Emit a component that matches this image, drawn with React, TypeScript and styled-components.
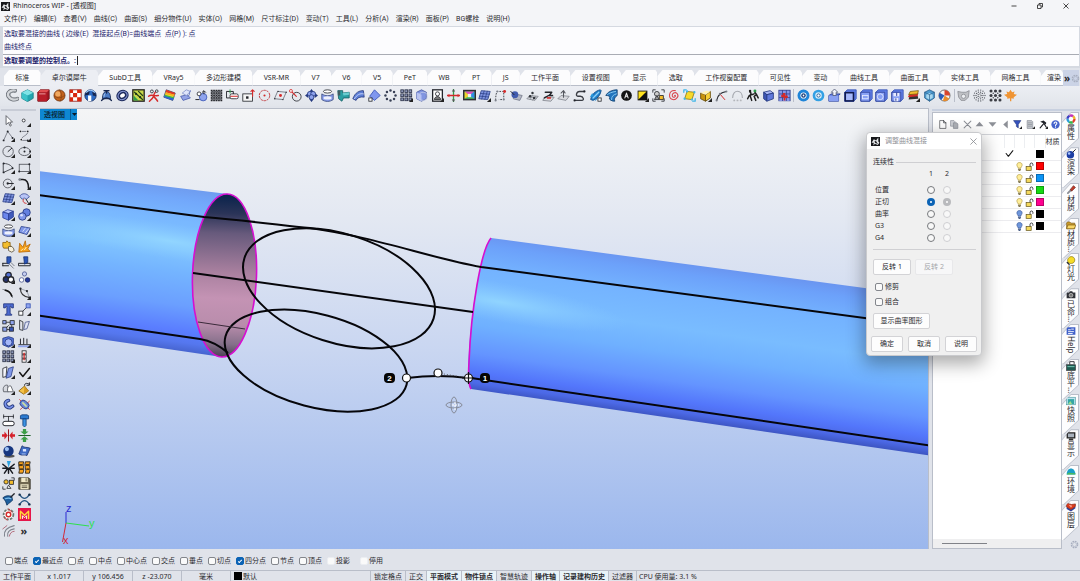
import React, { ReactNode } from 'react';
import styled, { createGlobalStyle } from 'styled-components';

const GlobalStyle = createGlobalStyle`
  *, *::before, *::after { box-sizing: border-box; }
  body { margin: 0; background: #e0e3ea; }
  button, input { font: inherit; color: inherit; }
`;

const INK = '#2a2a2e';
const LINE = '#b9bec9';
const CHROME = '#e0e3ea';

/* ---------- icon drawings, all on a 16 x 16 grid ---------- */

const B = '#3653b4';
const L = '#8fa4ee';
const K = '#23252b';
const R = '#d42a2a';
const Y = '#f3bd2d';
const G = '#2f9e4c';
const T = '#2b9fa3';
const S = '#7d828c';

const dots = (pts: number[][], fill = K, r = 1) =>
  pts.map(([x, y], i) => <circle key={i} cx={x} cy={y} r={r} fill={fill} />);

const cells = (x0: number, y0: number, n: number, step: number, size: number, fill: string, stroke = 'none') =>
  Array.from({ length: n * n }, (_, i) => (
    <rect key={i} x={x0 + (i % n) * step} y={y0 + Math.floor(i / n) * step} width={size} height={size} fill={fill} stroke={stroke} />
  ));

const ring = (n: number, r: number, size: number, fill: string) =>
  Array.from({ length: n }, (_, i) => {
    const a = (i / n) * Math.PI * 2;
    return <circle key={i} cx={8 + Math.cos(a) * r} cy={8 + Math.sin(a) * r} r={size} fill={fill} />;
  });

const line = (d: string, stroke = K, width = 1.2) => (
  <path d={d} fill="none" stroke={stroke} strokeWidth={width} strokeLinecap="round" strokeLinejoin="round" />
);

const shape = (d: string, fill: string, stroke = 'none') => <path d={d} fill={fill} stroke={stroke} strokeLinejoin="round" />;

const corners = line('M1 4V1H4M12 1H15V4M1 12V15H4M15 12V15H12', K, 1);

const panelBox = (inner: ReactNode) => (
  <>
    {shape('M1 4L4 1H15V12L12 15H1Z', '#5f7de6', B)}
    {shape('M1 4H12V15H1Z', '#8aa2f5', '#2b3f96')}
    {inner}
  </>
);

const art: Record<string, ReactNode> = {
  pipe: <>{line('M11 2C5 1 1 5 3 9C5 13 10 14 14 12', '#6a6f76', 5)}{line('M11 2C5 1 1 5 3 9C5 13 10 14 14 12', '#d3d6da', 3)}{line('M12 3C7 2 4 6 6 9C8 11 11 12 14 11', '#8e9299', 1)}</>,
  gem: <>{shape('M8 1L15 4.5V11.5L8 15.5L1 11.5V4.5Z', '#22a6b0', '#157680')}{shape('M8 1L15 4.5L8 8L1 4.5Z', '#7fe3e6')}{shape('M8 8V15.5L1 11.5V4.5Z', '#3cc3c9')}</>,
  redbox: <>{shape('M1 4L4 1H15V12L12 15H1Z', '#a11722', '#6b0e15')}{shape('M1 4L4 1H15L12 4Z', '#e04c50')}{shape('M1 5H12V15H1Z', '#b81d29')}{line('M3 6H10', '#f5b9b9', 1)}</>,
  orange: <><circle cx="8" cy="8" r="6.8" fill="#c2611b" stroke="#6c3410" /><circle cx="6" cy="6" r="3.2" fill="#f0a860" />{line('M2 9C6 12 11 11 14 8M8 1C11 5 11 10 9 15', '#7f3f13', .8)}</>,
  redcheck: <><rect x="1" y="1" width="14" height="14" fill="#fff" stroke="#8d1712" />{shape('M1 1H5V5H1ZM10 1H15V5H10ZM5 5H10V10H5ZM1 10H5V15H1ZM10 10H15V15H10Z', '#d8270f')}</>,
  globe: <><circle cx="8" cy="8" r="7" fill="#2d6cc4" stroke="#142a5c" />{shape('M5 15V8H9V15Z', '#fff')}{shape('M1 8C2 3 5 2 7 3L6 7ZM10 3L14 5L15 9L11 8Z', '#16264f')}{line('M3 4C6 1 10 1 13 4', '#9ec9f7', 1.4)}</>,
  bell: <>{shape('M3 12C3 6 5 3 8 3C11 3 13 6 13 12Z', '#4a7ac4', '#16264f')}{line('M2 14C5 10 11 10 14 14M5 2H11M8 2V5', '#16264f', 1.8)}{line('M6 6C5 7 5 8 5 9', '#b8d3f5', 1.2)}</>,
  torus: <><ellipse cx="8" cy="8" rx="5.4" ry="4.6" fill="#fff" stroke="#1c2a5c" strokeWidth="4.6" transform="rotate(-28 8 8)" /><ellipse cx="8" cy="8" rx="5.8" ry="4.8" fill="none" stroke="#8797d4" strokeWidth="1.4" transform="rotate(-28 8 8)" /></>,
  frame: <><rect x="1" y="1" width="14" height="14" fill="#c7d84b" stroke="#222" strokeWidth="1.6" />{shape('M2 14V8L8 14Z', G)}{line('M3 4L13 13M8 3L13 8', '#26421a', 1.5)}{dots([[5, 6], [10, 10]], '#1c3318', 1.4)}</>,
  figure: <>{line('M2 9C5 6 8 9 14 8M8 9C7 12 5 13 3 15M8 8L10 4M9 10C11 12 12 13 13 15', R, 1.8)}<circle cx="6" cy="3" r="1.8" fill="none" stroke={K} /><circle cx="12" cy="2.6" r="1.6" fill="none" stroke={K} /></>,
  rainbow: <>{shape('M4 1L15 5L12 14L1 10Z', '#f3e02a', '#223a7a')}{shape('M4 1L15 5L14.5 7L3.2 4Z', '#e0392a')}{shape('M3.2 4L14.5 7L14 9L2.6 6.2Z', '#f4a723')}{shape('M2 8L13.2 11L12 14L1 10Z', '#2b62d8')}{shape('M2.4 7L13.8 10L13.2 11.600L1.7 8.7Z', '#3bb54e')}</>,
  sheets: <>{shape('M2 9L10 7L14 11L5 14Z', '#93a3e6', '#4c5fae')}{shape('M4 5L9 1L14 3L9 8Z', '#dfe5fb', '#8391c9')}{line('M14 2C12 5 14 8 11 9', '#5a6eb9', 1)}</>,
  balls: <><circle cx="10" cy="10" r="4.6" fill={L} stroke={B} /><circle cx="5" cy="6" r="2.4" fill="#fff" stroke={K} />{line('M1 13H5M11 3V6M9 4L11 2L13 4', K, 1.2)}</>,
  weave: <><rect x="1" y="1" width="14" height="14" fill="#a9abb0" />{cells(1, 1, 5, 3, 2, '#26282d')}{cells(2.5, 2.5, 4, 3, 1.6, '#4b4e55')}</>,
  rectcut: <>{line('M1 3H9V11H1Z', K)}<rect x="5" y="6" width="10" height="6" rx="2" fill="#fff" stroke={K} />{line('M6 9H14', R, 1.3)}{line('M5 1V5', G)}</>,
  rectout: <><rect x="1" y="6" width="12" height="9" fill="#f5f5f5" stroke={K} /><rect x="5" y="9" width="3" height="3" fill={K} />{line('M13 1V9M11 3L13 1L15 3', R, 1.4)}</>,
  dotcircle: <><circle cx="8" cy="8" r="6.4" fill="none" stroke="#c0393d" strokeWidth="1.200" strokeDasharray="3 1" /><circle cx="8" cy="8" r="1.3" fill={R} /></>,
  rhomb: <>{line('M5 3L15 4L11 13L1 12Z', S)}<circle cx="8" cy="8" r="1.8" fill={R} />{dots([[5, 3], [15, 4], [11, 13], [1, 12]], K, .8)}</>,
  radius: <><circle cx="9.5" cy="9.5" r="5.4" fill="none" stroke={K} />{line('M2 2L9 9', R, 1.4)}<circle cx="2.4" cy="2.4" r="1.8" fill="#fff" stroke={R} /></>,
  fourball: <>{shape('M8 0L11 4H5ZM8 16L11 12H5ZM0 8L4 5V11ZM16 8L12 5V11Z', '#24397f')}<circle cx="6" cy="6" r="3" fill={L} stroke="#24397f" /><circle cx="10" cy="6" r="3" fill={L} stroke="#24397f" /><circle cx="8" cy="10" r="3" fill={L} stroke="#24397f" /></>,
  cup: <><ellipse cx="8" cy="3" rx="5" ry="2" fill="#fff" stroke={K} />{shape('M1 6C5 9 11 9 15 6V13C11 16 5 16 1 13Z', '#8b9fec', '#35477f')}<ellipse cx="8" cy="11" rx="5" ry="2" fill="#eef1fb" /></>,
  tealpipe: <>{shape('M1 2H7V5L15 4V11L8 11L6 15L2 12Z', T, '#176065')}{shape('M7 5L15 4V7L8 8Z', '#69cdd0')}{shape('M1 2H4V8H1Z', '#3e5d63')}</>,
  arcsurf: <>{shape('M1 12C4 4 9 2 14 2L15 10C10 9 6 11 5 14Z', '#5e7fd6', '#26397d')}{line('M3 12C6 7 10 5 14 6', '#c7d5fb')}</>,
  diamond: <>{shape('M8 1L15 8L8 14L2 9Z', '#7f97ee', B)}<rect x="1" y="11" width="4" height="4" fill="#fff" stroke={K} /></>,
  dotring: <>{ring(8, 6.2, 1.5, '#384055')}</>,
  grid3: <>{cells(1, 1, 3, 5, 3.4, '#8d98b8', '#2b3147')}</>,
  cubering: <>{shape('M2 4L8 1L14 4V12L8 15L2 12Z', '#8195e0', '#46589f')}{shape('M2 4L8 7V15L2 12Z', '#b6c1f3')}<circle cx="10" cy="9" r="5" fill="none" stroke="#c4cbe8" /></>,
  portrait: <><rect x="2" y="1" width="12" height="14" fill="#fff" stroke={K} strokeWidth="1.6" /><circle cx="8" cy="6" r="2.5" fill="none" stroke={K} />{shape('M4 13C5 8 11 8 12 13Z', '#777', K)}</>,
  cross: <>{line('M8 0V16', G, 1.6)}{line('M0 8H16', R, 1.8)}{shape('M8 0L10 3H6ZM8 16L10 13H6Z', '#555')}{shape('M0 8L3 6V10ZM16 8L13 6V10Z', R)}</>,
  screen: <><rect x="0" y="1" width="16" height="13" fill="#2e2e33" /><rect x="2" y="3" width="12" height="9" fill="#4cc46a" />{shape('M2 3H14L8 8Z', '#e04cc0')}{shape('M2 3V12L8 8Z', '#f0d02a')}{shape('M14 3V12L8 8Z', '#2f8de6')}<rect x="6" y="6" width="4" height="4" fill="#eee" /></>,
  mesh: <>{shape('M4 2L15 3L12 13L1 12Z', '#7f94e0', '#2b3f88')}{line('M7.6 2.4L4.6 12.4M11.4 2.8L8.4 12.8M3 5.4L14 6.4M2 8.8L13 9.8', '#2b3f88', .9)}</>,
  dotrect: <><path d="M2 14C2 8 3 4 4 3H12V13H6" fill="none" stroke={K} strokeDasharray="2 1.5" />{dots([[4, 3], [12, 13], [2, 14]], S, 1.3)}{dots([[13, 3]], R, 1.8)}</>,
  meshball: <>{shape('M6 6L15 8L12 14L4 12Z', '#b4b8c4', '#74798a')}<circle cx="6" cy="7" r="4.2" fill="#425cae" />{line('M1 3L5 7', K)}</>,
  graymesh: <>{shape('M5 8L15 9L11 14L1 12Z', '#d8dadf', '#82868f')}{line('M8 8L5 13M12 9L8 14M3 10L13 11', '#82868f', .8)}{dots([[5, 9], [10, 11], [8, 5]], '#33363c', 1.5)}</>,
  twist: <>{shape('M3 10L15 10L11 15L1 14Z', '#d8dadf', '#82868f')}{line('M4 4H12L9 8H13M3 11L8 8', K, 1.7)}<rect x="6" y="10" width="5" height="2" fill={R} /></>,
  meshup: <>{shape('M5 8L15 9L11 14L1 12Z', '#d8dadf', '#82868f')}{line('M8 10V2M5 5L8 2L10 5', '#55585f', 1.3)}</>,
  scurve: <>{line('M2 14H11C14 14 13 9 9 9H6C3 9 4 3 8 3H14', '#3a3d44', 1.7)}{dots([[14, 3], [2, 14]], K, 1.4)}</>,
  rocket: <>{shape('M14 1C8 2 3 7 2 13L5 14C10 12 14 8 15 2Z', '#1f7fc9', '#124a85')}{shape('M4 5L1 10L6 9ZM8 13L7 15L12 11Z', '#2596dd')}{line('M12 4L5 11', '#8fd0f7', 1.6)}<rect x="11" y="11" width="4" height="4" fill="#fff" stroke={K} /></>,
  wings: <>{shape('M15 1C8 1 3 4 1 8C3 8 5 8 6 10C4 12 7 15 12 15C11 12 12 10 15 8Z', '#2174bd', '#13406f')}{line('M13 3C8 4 5 5 3 7M14 6C10 7 8 9 8 13', '#85c6ef')}</>,
  black: <><circle cx="8" cy="8" r="6.6" fill="#141414" />{line('M6 11L8 5L10 11M7 9H9', '#eee', 1.3)}</>,
  invert: <>{shape('M2 2H14V14H2Z', '#111')}{shape('M3 3H13L3 13Z', '#ffe21e')}</>,
  groupy: <>{corners}<circle cx="6" cy="6" r="3" fill="#ccc" stroke={K} />{shape('M3 13L6 8L9 13Z', '#999', K)}{shape('M9 8H14V13H9Z', Y, K)}</>,
  spiral: <>{line('M8 8C9 7 10 9 8 10C5 11 4 7 7 5C11 3 14 8 11 11C8 15 1 13 2 7C2 4 5 1 9 2', '#d9454b', 1.3)}</>,
  selrhomb: <>{shape('M5 3L14 4L11 13L2 12Z', '#f7d92b', '#8a7412')}{line('M1 4V1H4M15 12V15H12', '#42b7e8', 1.600)}{dots([[5, 3], [14, 4], [11, 13], [2, 12]], '#42b7e8', 1.4)}</>,
  ybox: <>{shape('M2 5L8 7V15L2 12Z', '#c8940f', '#614708')}{shape('M8 7L14 3V11L8 15Z', '#f7cf36', '#614708')}{shape('M2 5L8 7L14 3L9 2Z', '#fff3b8')}</>,
  curvey: <>{line('M2 14C4 6 8 4 14 3', K, 1.3)}{line('M6 6L12 13', R)}{dots([[2, 14], [14, 3], [6, 6]], S, 1.3)}</>,
  grayarc: <><path d="M2 11C2 0 14 0 14 11" fill="none" stroke="#a6a9b0" strokeWidth="1.3" />{dots([[4, 14], [8, 14], [12, 14]], '#b4b6bb', 1.2)}</>,
  people: <>{line('M5 4C7 5 6 8 4 8L2 12M5 8L7 14M11 4L13 7L10 9L12 14M13 7L15 11M7 7L10 6', '#1d1d1d', 1.8)}{dots([[5, 2.500]], '#1d1d1d', 1.500)}{dots([[11, 2.500]], G, 1.800)}</>,
  cube: <>{shape('M2 4L10 2L14 5L6 7Z', '#a9b7f5', '#24397f')}{shape('M2 4L6 7V15L2 12Z', '#3f57b6', '#24397f')}{shape('M6 7L14 5V12L6 15Z', '#6079dc', '#24397f')}</>,
  redblue: <><rect x="0.500" y="1" width="15" height="14" fill="#33428e" />{cells(1.500, 2, 3, 4.600, 3.600, '#8797e8')}{shape('M6 5H9V8H12V11H9V14H7V10H4V7H6Z', R)}</>,
  ringblue: <><circle cx="8" cy="8" r="5.6" fill="#fff" stroke="#1e84d8" strokeWidth="3.6" /><circle cx="8" cy="8" r="2.8" fill="#183f7c" /><circle cx="8" cy="8" r="1.1" fill="#fff" /></>,
  ringlight: <><circle cx="8" cy="8" r="5.6" fill="#d8effc" stroke="#33a0e4" strokeWidth="3.2" /><circle cx="8" cy="8" r="2" fill="#fff" stroke="#16508c" /></>,
  boxup: <>{shape('M1 8L4 6H15L13 8V15H1Z', '#5371dd', '#25388a')}{shape('M1 8H13V15H1Z', '#89a0f2')}{shape('M8 0L12 4H10V8H6V4H4Z', '#f2f4fb', '#555d78')}</>,
  boxplain: <>{panelBox(<rect x="1.6" y="4.6" width="10" height="10" fill="#a6b8fa" stroke="#101a4e" strokeWidth="1.8" />)}</>,
  boxrect: <>{panelBox(<rect x="3" y="8" width="7" height="4" fill="none" stroke="#e9edff" />)}</>,
  boxcirc: <>{panelBox(<circle cx="6.5" cy="9.5" r="3.6" fill="none" stroke="#e9edff" />)}</>,
  boxsave: <>{panelBox(<>{shape('M3 5H10V9H3ZM4 11H9V15H4Z', '#e9edff')}{line('M7 5V8M6 12V14', '#2b3f96')}</>)}</>,
  layers: <>{shape('M3 9L13 8L14 12L2 13Z', '#333')}{shape('M3 6L14 5L13 9L1 10Z', R)}{shape('M4 3L14 2L13 6L2 7Z', Y, '#7a5b10')}</>,
  glass: <>{shape('M8 1L14 4V11L8 15L2 11V4Z', '#4d9bd0', '#2b5f8a')}{shape('M8 5L12 7V11L8 13L4 11V7Z', '#a8d7ef')}{line('M2 4L8 7L14 4M8 7V15', '#2b5f8a', .8)}</>,
  beach: <><circle cx="8" cy="8" r="6.8" fill="#f2f2f2" stroke="#555" />{shape('M8 8L8 1.2A6.8 6.8 0 0 1 14.8 8Z', '#d8442c')}{shape('M8 8L14 12A6.8 6.8 0 0 1 6 14.5Z', '#e98b2a')}{shape('M8 8L2 4.6A6.8 6.8 0 0 0 4 13.6Z', '#2a5db8')}</>,
  grayface: <>{shape('M1 3L6 4H11L15 2L14 10L10 14H5L2 10Z', '#bfc1c5', '#8c8f95')}<circle cx="8" cy="9" r="2.6" fill="#eceef1" stroke="#8c8f95" /></>,
  dotfill: <>{ring(14, 6.8, .8, '#54575e')}{ring(10, 4.3, .8, '#54575e')}{ring(5, 2, .8, '#54575e')}</>,
  dotgrid: <>{[2.500, 8, 13.500].map(y => <g key={y}>{dots([[2.500, y], [8, y], [13.500, y]], '#3b3d44', 1.9)}</g>)}{dots([[5.200, 5.200], [10.800, 5.200], [5.200, 10.800], [10.800, 10.800]], '#3b3d44', .9)}</>,
  maple: <>{shape('M8 1L10 4L13 3L12 6L16 7L12 10L12 12L9 11.4V15H7.4V11.4L4 12L4 10L0 7L4 6L3 3L6 4Z', '#ef9434')}</>,

  arrow: <>{shape('M5 2V13L8 10.5L10 15L11.5 14L9.6 10H13Z', '#fff', '#4b4e55')}</>,
  point: <circle cx="7" cy="8" r="1.8" fill="#fff" stroke={K} />,
  polyline: <>{line('M2 14L7 3L13 11', S)}{dots([[2, 14], [7, 3], [13, 11]], K, 1.2)}</>,
  ctrl: <>{line('M3 3H12C13 8 3 9 4 14H12', S)}{dots([[3, 3], [12, 3], [4, 13]], '#fff', 1.6)}{dots([[3, 3], [12, 3], [4, 13], [12, 14]], K, 1.1)}</>,
  circle: <><circle cx="7.5" cy="8" r="6.4" fill="none" stroke="#4b4e55" />{line('M7.5 8L12 4', K)}</>,
  ellipse: <><ellipse cx="8" cy="8" rx="7" ry="5" fill="none" stroke="#4b4e55" />{dots([[8, 8], [8, 3], [15, 8]], K, 1.2)}</>,
  arc: <>{line('M2 3C9 3 13 7 13 9L2 14Z', '#4b4e55')}{dots([[2, 3], [2, 14], [13, 9]], K, 1.2)}</>,
  rect: <><rect x="1.5" y="4" width="12.5" height="9" fill="none" stroke="#4b4e55" />{dots([[1.5, 13], [14, 4]], K, 1.2)}</>,
  polygon: <><circle cx="7" cy="8" r="5.4" fill="none" stroke="#4b4e55" />{line('M7 8H14', K)}<circle cx="7" cy="8" r="1.4" fill={K} /></>,
  fillet: <>{line('M2 3H6C11 3 13 7 13 14', '#1c1c1f', 2)}{dots([[2, 3]], S, 1.5)}</>,
  patch: <>{shape('M2 5C5 1 11 1 14 6L10 9C9 7 7 7 5 9Z', '#b9c5f7', '#3e4f98')}{line('M7 9C5 11 7 14 10 14', R)}{line('M10 9L13 14', K)}</>,
  box: <>{shape('M1 5L7 2L14 4L8 7Z', '#b7c5fb', '#2b3f96')}{shape('M1 5L8 7V15L1 12Z', '#6b86ec', '#2b3f96')}{shape('M8 7L14 4V11L8 15Z', '#3f59bb', '#2b3f96')}</>,
  spheres: <><circle cx="10.5" cy="5.5" r="4.6" fill="#6480e0" stroke="#22357d" /><circle cx="5.4" cy="10.4" r="4.6" fill="#8298ea" stroke="#22357d" /><circle cx="4.4" cy="9" r="1.6" fill="#dbe3ff" /></>,
  plane: <>{shape('M4 3L15 5L11 13L1 10Z', '#7f97e8', '#2b3f88')}{line('M6 9L9 5M9 11L13 6', '#e4eafe', 1)}</>,
  puzzle: <>{shape('M1 3H5L6 1L8 3H10V7L12 8L10 10H2L1 8Z', Y, '#8a5f0e')}{shape('M8 8H12L14 10L15 13L12 15L8 13Z', '#f7f0dc', '#5a5140')}</>,
  explode: <>{shape('M1 15L2 4L6 9L9 1L10 8L15 5L12 11L15 14Z', '#f5a21d', '#b86a0c')}{line('M4 13L6 11M8 12L10 9', '#fff1bd', 1.2)}</>,
  trim: <>{line('M1 9H8M1 12H8M1 9V12', K)}{shape('M6 1H11V7L8 10L6 8Z', '#2c56b8', '#183275')}{line('M9 10L14 15M11 8L15 12', S)}</>,
  split: <>{line('M1 9H15V12H1Z', K)}{shape('M7 1H12V8L8 10Z', '#2c56b8', '#183275')}</>,
  group: <><circle cx="8" cy="5" r="3.4" fill="#5372d8" stroke={K} strokeWidth="1.6" /><circle cx="5" cy="10.5" r="3.4" fill="#23326e" stroke={K} strokeWidth="1.6" /><circle cx="11" cy="10.5" r="3.4" fill="#fff" stroke={K} strokeWidth="1.6" /></>,
  ungroup: <><circle cx="8" cy="3.6" r="2.6" fill="#c7cff0" stroke="#4c5a92" /><circle cx="4.4" cy="11" r="2.8" fill="#fff" stroke="#4c5a92" /><circle cx="11.8" cy="11" r="2.8" fill="#24389a" stroke="#14205c" /></>,
  bend: <>{line('M1 3C8 3 12 7 13 13', S, 1)}{line('M4 4C9 5 11 8 12 11', '#111', 2)}</>,
  bendpts: <>{line('M3 2C3 9 8 12 14 13', '#333', 1.4)}{line('M3 2L11 5L14 13', S, .8)}{dots([[3, 2], [11, 5], [14, 13]], K, 1.4)}</>,
  text: <>{shape('M2 1H14V6H12L11 4H10V13L12 14V15H4V14L6 13V4H5L4 6H2Z', '#4d6ad0', '#22357d')}</>,
  link: <>{line('M4 12L12 4', K, 1)}<rect x="1" y="10" width="5" height="5" fill="#fff" stroke={K} /><rect x="10" y="1" width="5" height="5" fill={L} stroke={B} /></>,
  squares: <>{line('M3 4H12V13H3M3 13L8 8', K, 1)}<rect x="1" y="2" width="4" height="4" fill={L} stroke={K} /><rect x="10" y="2" width="5" height="5" fill={L} stroke={K} /><rect x="1" y="10" width="5" height="5" fill={L} stroke={K} /><rect x="9" y="10" width="5" height="5" fill={B} stroke={K} /></>,
  slant: <>{line('M2 2V13L6 14V4Z', K, 1)}{shape('M9 4L14 3L11 12L7 13Z', '#dfe4f6', '#4a578c')}</>,
  boxball: <>{shape('M1 4L8 2L14 4V12L8 15L1 12Z', '#5474dc', '#22357d')}<circle cx="8" cy="9" r="4.4" fill="#a4b6f8" stroke="#22357d" /></>,
  bars: <>{line('M1 12H15M3 11V5M7 11V4M11 11V5', K, 1.2)}{line('M1 14H14', L, 2)}</>,
  chain: <>{[1, 6, 11].map(y => <rect key={y} x="5" y={y} width="5" height="4" fill="#fff" stroke={K} />)}{line('M7.5 4V12', R, 1.6)}</>,
  slab: <>{shape('M1 3L6 1L5 13L1 14Z', '#f4f5fb', K)}{shape('M8 3L14 1L11 13L5 15Z', '#7f97e8', '#2b3f88')}</>,
  check: <>{line('M2 8L6 13L14 3', '#151515', 1.8)}</>,
  clouds: <>{shape('M2 12C0 6 4 3 7 4L8 12Z', '#d7d9df', '#50545d')}{shape('M7 12C6 6 9 4 11 5L14 12Z', '#fff', '#50545d')}</>,
  pyramid: <>{shape('M1 11L8 5L13 11L7 15Z', '#f3c248', '#805c12')}{shape('M8 5L13 11L7 15Z', '#d79a20')}{line('M8 4C8 1 12 1 14 3M14 1V4H11', K, 1.2)}</>,
  bluec: <>{line('M8 3C2 4 3 12 10 12L13 10', '#24397f', 4.4)}{line('M8 3C2 4 3 12 10 12L13 10', '#7a92e8', 2.2)}</>,
  capsule: <>{line('M2 2L14 14M14 4L3 14', R, 1)}<rect x="2" y="4" width="12" height="8" rx="4" fill="#6c87d8" stroke="#2a3b7b" transform="rotate(40 8 8)" />{line('M6 6L10 10', '#cfe0a0', 2)}</>,
  dimension: <>{line('M2 3H14M2 1V5M14 1V5M8 3V9', K, 1)}<rect x="1" y="9" width="14" height="5.4" rx="2.6" fill="#fff" stroke={K} strokeWidth="1.2" /></>,
  bolt: <>{shape('M3 2L5 1H11L13 2V6H3Z', '#2c7ad0', '#123f7a')}{shape('M6 6H10V14L8 16L6 14Z', '#3c94e4', '#123f7a')}</>,
  redarrows: <>{shape('M0 6.4H3V3L7 8L3 13V9.6H0ZM16 6.4H13V3L9 8L13 13V9.6H16Z', '#d6202a')}{line('M8 1V15', '#8d1218', 1.2)}</>,
  greenarrows: <>{shape('M6 0H10V3H13L8 7L3 3H6ZM6 16H10V13H13L8 9L3 13H6Z', '#3b9e46')}{line('M1 8H15', '#1e5f28', 1.4)}</>,
  bigball: <><ellipse cx="9" cy="13.6" rx="6.6" ry="2" fill="#555" /><circle cx="8" cy="7.4" r="6.4" fill="#16367f" /><circle cx="6" cy="5" r="2.6" fill="#9cc1f5" /></>,
  bluesurf: <>{shape('M5 1C8 4 11 2 15 4L11 13C8 11 5 14 1 11Z', '#3f6bc4', '#1c3170')}<rect x="6" y="5" width="4" height="3" fill="#dfe8ff" />{line('M5 11L9 11', '#a9c4f5')}</>,
  xcut: <>{line('M1 4L7 9L3 15M15 4L9 9L13 15M1 9H6M15 9H10M8 9V15', '#17191f', 1.800)}{shape('M6 0H11L8 8Z', '#2fa1df')}</>,
  tiger: <>{shape('M1 1H7C5 5 9 9 6 15H1C3 10 0 6 1 1Z', '#f5a11e', '#171717')}{shape('M9 1H15C13 6 16 10 14 15H9C11 11 7 6 9 1Z', '#f5a11e', '#171717')}{line('M2 5H5M3 10H6M10 5H13M11 10H13', '#171717', 1.8)}</>,
  selshape: <>{line('M12 1H15V4M1 12V15H4', K, 1)}<circle cx="5" cy="6" r="2.6" fill={Y} stroke={K} /><rect x="9" y="4" width="5" height="5" fill={Y} stroke={K} />{shape('M6 14L8 10L11 14Z', '#fff', K)}</>,
  save: <>{shape('M1 1H13L15 3V15H1Z', '#6f6850', '#2e2a1e')}{shape('M4 1H12V6H4ZM3 9H13V15H3Z', '#f0e9c8')}{line('M5 11H11M5 13H11M10 2V5', '#4a4532', 1)}</>,
  bluearrow: <>{shape('M1 6C4 3 8 3 12 4L13 9C11 11 9 12 6 15C5 11 4 9 1 6Z', '#1f5f9e', '#0f355e')}{line('M11 5L15 1', K, 1.6)}{line('M4 7C7 6 9 6 11 7', '#7cc0ee', 1.4)}</>,
  xcurves: <>{line('M2 2C6 8 10 8 14 2M2 14C6 8 10 8 14 14', '#2b5a86', 1.5)}{dots([[2, 2], [14, 2], [2, 14], [14, 14]], '#17314d', 1.5)}</>,
  wheel: <><circle cx="8" cy="8" r="6" fill="#fff" stroke="#6e7a74" strokeWidth="2.2" strokeDasharray="3 1.4" /><circle cx="8" cy="8" r="2.8" fill="none" stroke={R} strokeWidth="1.8" />{line('M8 1L12 5M3 12L6 15', R, 1.2)}</>,
  mlogo: <><rect x="0" y="0" width="16" height="16" fill="#e5174a" />{line('M3 13V4L8 9L13 4V13', '#ffd83a', 1.800)}{line('M5.500 13V9.500L8 12L10.500 9.500V13', '#fff', 1.1)}</>,
  curves: <>{line('M3 15C2 8 6 4 15 2M7 15C6 10 9 7 15 6', S, 1.3)}{line('M9 15C10 11 12 9 15 9M1 6L6 2', '#a56', 1)}</>,

  page: <>{shape('M3 1H10L14 5V15H3Z', '#fff', K)}{line('M10 1V5H14', K)}</>,
  copy: <>{shape('M1 1H7L9 3V11H1Z', '#cfd1d6', S)}{shape('M6 5H12L14 7V15H6Z', '#aeb1b7', S)}</>,
  cross2: <>{line('M2 2L14 14M14 2L2 14', '#8d9097', 1.8)}</>,
  up: <>{shape('M8 3L15 11H1Z', '#8d9097')}</>,
  down: <>{shape('M8 12L15 4H1Z', '#8d9097')}</>,
  left: <>{shape('M4 8L12 1V15Z', '#8d9097')}</>,
  funnel: <>{shape('M1 1H14L9.4 8V14L6 11.6V8Z', '#3552bd', '#203377')}</>,
  doc: <>{shape('M2 1H10L12 3V15H2Z', '#c5c8cd', S)}{line('M4 5H10M4 8H10M4 11H10', S, 1)}</>,
  hammer: <>{shape('M2 3L8 1L13 5L12 8L9 6Z', '#1f2127')}{line('M8 5L13 13M2 14L8 7', '#1f2127', 2)}</>,
  help: <><circle cx="8" cy="8" r="7.4" fill="#4563cc" />{line('M5.6 6C5.6 2.8 10.6 3 10.4 6C10.2 8 8 8 8 10M8 12.6V12.8', '#fff', 1.8)}</>,

  wheelcolor: <>{['#e23c2c', '#35b44a', '#2b9fd8', '#3c3fc4', '#c433b8', '#eeb52b'].map((c, i) => (
    <circle key={c} cx="8" cy="8" r="5.6" fill="none" stroke={c} strokeWidth="3.8" strokeDasharray="5.9 29.3" strokeDashoffset={-5.86 * i} />
  ))}</>,
  render: <><circle cx="7" cy="9" r="6" fill="#1d3fa5" /><circle cx="5" cy="7" r="2" fill="#a9c6ff" />{line('M11 5L15 1', K, 1.6)}</>,
  brush: <>{line('M3 13L8 8', '#8c8f96', 3)}{shape('M7 7L12 1L15 4L9 10Z', '#c23a2a', '#5c1710')}</>,
  folder: <>{shape('M1 3H6L8 5H14V14H1Z', '#c89a2c', '#73540f')}{shape('M3 8H16L13 14H1Z', '#f9d768', '#73540f')}</>,
  lamp: <>{shape('M3 11C1 6 6 1 11 3C15 5 15 11 11 13C8 14 5 14 3 11Z', '#f6dc28', '#7d6b10')}{line('M2 12L5 15', K, 2)}</>,
  camera: <>{shape('M1 4H5L6 2H10L11 4H15V13H1Z', '#303238')}<circle cx="8" cy="8.4" r="3" fill="#777" stroke="#ddd" /></>,
  helpbox: <><rect x="1" y="2" width="14" height="12" fill="#3e5fc9" />{line('M4 6H7M4 9H12M9 5H12M4 12H10', '#fff', 1.4)}</>,
  level: <><rect x="1" y="6" width="14" height="9" fill="#1e5b52" stroke={K} />{line('M6 5V1H13V4', K, 1.4)}{line('M3 9H13', '#7fd0bf', 1.4)}</>,
  snapshot: <><rect x="1" y="2" width="14" height="12" fill="#bfe2ef" stroke="#4d9a9e" /><rect x="3" y="5" width="10" height="8" fill="#35a7a5" />{shape('M3 13L7 8L10 13Z', '#9fdc8d')}</>,
  monitor: <><rect x="1" y="2" width="14" height="10" fill="#222" /><rect x="3" y="4" width="10" height="6" fill="#a9b2bd" />{shape('M5 12H11L12 15H4Z', '#333')}</>,
  dome: <>{shape('M1 12C1 -1 15 -1 15 12Z', '#1b9fc9')}{shape('M1 12C4 6 12 12 15 9V12Z', '#4dbb58')}</>,
  layerred: <>{shape('M1 8L8 12L15 7V10L8 15L1 11Z', '#2e3f9d')}{shape('M1 2L9 4L15 3V7L8 12L1 8Z', '#dc3a1d', '#7a1c0c')}{shape('M4 4L10 6L8 9Z', '#f7a38f')}</>,
  rhino: <><rect width="16" height="16" fill="#17181b" />{shape('M1 10L5 4L9 6L13 1L13 8L15 10L12 14L7 12L4 15L5 10Z', '#e6e8ea')}{shape('M6 8L9 7L10 10L8 11Z', '#17181b')}{line('M2 3L4 2M11 12L9 9', '#17181b', 1.500)}</>,
  bulb: <>{shape('M8 1C13 1 14 6 11 9L10.4 11H5.6L5 9C2 6 3 1 8 1Z', '#ffee9a', '#a2872a')}{line('M6 13H10M7 15H9', '#6a5c2a', 1.6)}</>,
  bulboff: <>{shape('M8 1C13 1 14 6 11 9L10.4 11H5.6L5 9C2 6 3 1 8 1Z', '#6f97dc', '#2c4a8b')}{line('M6 13H10M7 15H9', '#27406f', 1.6)}</>,
  lock: <>{line('M9 8V4C9 1 14 1 14 4V6', K, 1.5)}<rect x="2" y="8" width="9" height="7" fill="#f5d95c" stroke="#5e4f16" strokeWidth="1.2" /></>,
  gear: <><circle cx="8" cy="8" r="5.6" fill="none" stroke="#a7aebf" strokeWidth="2.4" strokeDasharray="3 1.4" /><circle cx="8" cy="8" r="3.6" fill="none" stroke="#a7aebf" /></>,
};

interface IconProps { name: string; size?: number; menu?: boolean }

const Svg = styled.svg<{ $size: number }>`
  display: block;
  flex: none;
  width: ${p => p.$size}px;
  height: ${p => p.$size}px;
`;

const Icon = ({ name, size = 13, menu }: IconProps) => (
  <Svg $size={size} viewBox="0 0 16 16" aria-hidden="true">
    {art[name]}
    {menu && <path d="M16 11V16H11Z" fill="#222" />}
  </Svg>
);

/* ---------- shared controls ---------- */

const BareButton = styled.button`
  display: flex;
  align-items: center;
  justify-content: center;
  border: 0;
  padding: 0;
  background: none;
`;

const Shell = styled.div`
  display: flex;
  flex-direction: column;
  height: 100vh;
  overflow: hidden;
  background: ${CHROME};
  color: ${INK};
  font-family: 'Noto Sans', 'Noto Sans CJK SC', sans-serif;
  font-size: 7px;
  line-height: 10px;
  white-space: nowrap;
`;

/* ---------- title and menu ---------- */

const TitleBar = styled.header`
  display: flex;
  align-items: center;
  gap: 3px;
  flex: none;
  height: 12px;
  padding: 0 8px 0 1px;
  background: #f4f5f8;
`;
const TitleText = styled.h1`
  flex: 1;
  margin: 0;
  font: inherit;
`;
const WindowButtons = styled.div`
  display: flex;
  gap: 14px;
`;
const WindowButton = styled(BareButton)`
  width: 12px;
  height: 12px;
`;

const MenuBar = styled.nav`
  display: flex;
  align-items: center;
  gap: 7px;
  flex: none;
  height: 14px;
  padding-left: 4px;
  background: #f4f5f8;
  font-family: Roboto, 'Noto Sans CJK SC', sans-serif;
`;

/* ---------- command line ---------- */

const CommandArea = styled.section`
  flex: none;
  padding: 1px 1px 2px 3px;
  background: #d5d9e1;
  color: #23236b;
  font-family: Roboto, 'Noto Sans CJK SC', sans-serif;
`;
const History = styled.div`
  height: 28px;
  padding: 1px 1px 0;
  background: #fcfcfe;
  border-bottom: 1px solid #a9acb4;
  line-height: 13px;
  white-space: pre;
`;
const Prompt = styled.label`
  display: flex;
  align-items: center;
  height: 11px;
  padding: 0 1px;
  background: #fcfcfe;
  font-weight: 700;
`;
const PromptInput = styled.input`
  flex: 1;
  height: 9px;
  margin-left: 1px;
  padding: 0;
  border: 0;
  border-left: 1px solid #222;
  outline: 0;
  background: none;
`;

/* ---------- toolbar tabs and tools ---------- */

const TabStrip = styled.div`
  display: flex;
  flex: none;
  height: 18px;
  padding: 2px 1px 0 4px;
  background: ${CHROME};
`;
const TabGroup = styled.div`
  display: flex;
  flex: 1;
  min-width: 0;
`;
const Tab = styled.button<{ $active?: boolean }>`
  flex: 1 1 auto;
  height: 16px;
  padding: 0 6px;
  border: 0;
  border-bottom: 1px solid ${p => (p.$active ? '#eceef3' : LINE)};
  background: ${p => (p.$active ? '#eceef3' : '#fcfcfd')};
  clip-path: polygon(5px 0, calc(100% - 2px) 0, 100% 3px, 100% 100%, 0 100%, 0 6px);
`;
const TabCut = styled(Tab)`
  flex: 0 0 22px;
  overflow: hidden;
  text-align: left;
`;
const More = styled(BareButton)`
  width: 8px;
  height: 16px;
  background: #cbd3e6;
  font-size: 10px;
  font-weight: 700;
`;
const ToolRow = styled.div`
  display: flex;
  align-items: center;
  justify-content: space-between;
  flex: none;
  height: 20px;
  padding: 0 62px 2px 5px;
  background: linear-gradient(#eceef3, #e2e5eb);
`;
const Tool = styled(BareButton)`
  width: 14px;
  height: 14px;
`;
const ToolDivider = styled.span`
  width: 1px;
  height: 13px;
  background: ${LINE};
`;

/* ---------- work area ---------- */

const Work = styled.main`
  position: relative;
  display: flex;
  flex: 1;
  min-height: 0;
  padding-top: 2px;
`;
const SideTools = styled.div`
  display: flex;
  flex: none;
  flex-direction: column;
  width: 40px;
  padding: 1px 4px 11px 1px;
`;
const Grip = styled.div`
  height: 2px;
  margin-bottom: 2px;
  background: #c8ccd6;
`;
const SideGrid = styled.div`
  display: grid;
  flex: 1;
  grid-template-columns: 16px 16px;
  align-content: space-between;
  min-height: 0;
`;
const SideTool = styled(Tool)`
  font-size: 11px;
  font-weight: 700;
`;
const Viewport = styled.section`
  position: relative;
  flex: 1;
  min-width: 0;
  border-top: 1px solid ${LINE};
  border-right: 1px solid ${LINE};
  background: linear-gradient(#f4f5f6, #e3e8f2 25%, #c9d6f1 55%, #9bb7ed);
`;
const Scene = styled.svg`
  display: block;
  position: absolute;
  inset: 0;
  width: 100%;
  height: 100%;
`;
const ViewTitle = styled.div`
  position: absolute;
  top: 0;
  left: 0;
  display: flex;
  align-items: center;
  height: 11px;
  padding-left: 4px;
  background: #0e87d2;
  color: #0a1a28;
  font-weight: 500;
`;
const ViewMenu = styled(BareButton)`
  width: 7px;
  height: 11px;
  margin-left: 5px;
  border-left: 1px solid #0a5c94;
`;

/* ---------- layer panel ---------- */

const Panel = styled.aside`
  display: flex;
  flex: none;
  width: 148px;
  margin: 1px 0 0 3px;
  border-top: 2px solid #c8d0df;
  padding-top: 1px;
`;
const PanelBody = styled.div`
  display: flex;
  flex: 1;
  flex-direction: column;
  min-width: 0;
  border: 1px solid ${LINE};
  background: #fff;
`;
const PanelTools = styled.div`
  display: flex;
  align-items: center;
  justify-content: space-between;
  flex: none;
  height: 22px;
  padding: 2px 0 0 4px;
  border-bottom: 1px solid #d5d7dc;
`;
const PanelTool = styled(BareButton)`
  width: 10px;
  height: 12px;
`;
const LayerTable = styled.table`
  width: 100%;
  border-collapse: collapse;
  table-layout: fixed;
  tr { height: 12px; }
  th { height: 13px; padding: 0; border-left: 1px solid #eceef1; font-weight: 400; text-align: left; }
  th:first-child { width: 71px; border-left: 0; }
  th:last-child { width: 16px; }
  td { padding: 0; border-bottom: 1px solid #ececef; }
  svg { margin: 0 auto; }
`;
const Swatch = styled.span<{ $color: string }>`
  display: block;
  flex: none;
  width: 8px;
  height: 8px;
  border: 1px solid #0004;
  background: ${p => p.$color};
  td > & { margin: 0 auto; }
`;
const Filler = styled.div`
  flex: 1;
`;
const Scroll = styled.div`
  flex: none;
  height: 9px;
  padding: 4px 0 0 9px;
  background: #efeff0;
`;
const Thumb = styled.div`
  width: 45px;
  height: 1px;
  background: #808288;
`;
const Rail = styled.div`
  display: flex;
  flex: none;
  flex-direction: column;
  width: 18px;
  padding-right: 1px;
`;
const RailTab = styled.button`
  position: relative;
  display: flex;
  flex: 1 1 0;
  flex-direction: column;
  align-items: center;
  min-height: 0;
  margin-bottom: -5px;
  padding: 2px 0 0;
  border: 0;
  background: ${LINE};
  clip-path: polygon(9px 0, 100% 0, 100% calc(100% - 14px), 2px 100%, 0 100%, 0 10px);
  font-size: 8px;
  line-height: 10px;
  &::before {
    content: '';
    position: absolute;
    inset: 1px 1px 0 0;
    background: #fdfdfe;
    clip-path: polygon(9px 0, 100% 0, 100% calc(100% - 14px), 1px 100%, 0 100%, 0 10px);
  }
  > * { position: relative; }
`;
const RailLabel = styled.span`
  writing-mode: vertical-rl;
`;
const RailFoot = styled.div`
  display: flex;
  justify-content: flex-end;
  flex: none;
  height: 14px;
  padding-top: 5px;
`;

/* ---------- dialog ---------- */

const Dialog = styled.form`
  position: absolute;
  top: 26px;
  right: 98px;
  width: 116px;
  padding-bottom: 3px;
  border: 1px solid #c9cacd;
  border-radius: 4px;
  background: #f0f0f0;
  box-shadow: 0 6px 18px 2px #0005;
`;
const DialogTitle = styled.div`
  display: flex;
  align-items: center;
  gap: 5px;
  height: 16px;
  padding: 0 4px;
  border-radius: 4px 4px 0 0;
  background: #fff;
  color: #8f9196;
`;
const DialogName = styled.span`
  flex: 1;
`;
const DialogBody = styled.div`
  display: flex;
  flex-direction: column;
  padding: 8px 5px 0 6px;
`;
const Legend = styled.div`
  display: flex;
  align-items: center;
  gap: 2px;
  height: 10px;
  &::after { content: ''; flex: 1; height: 1px; background: #cfcfd2; }
`;
const RadioGrid = styled.div`
  display: grid;
  grid-template-columns: 48px 16px 16px;
  grid-template-rows: 15px;
  grid-auto-rows: 12px;
  align-items: center;
  padding: 2px 2px 5px;
  border-bottom: 1px solid #d0d0d3;
`;
const ColumnHead = styled.span`
  align-self: start;
  text-align: center;
`;
const Radio = styled.input`
  appearance: none;
  width: 8px;
  height: 8px;
  margin: 0 auto;
  border: 1px solid #77797d;
  border-radius: 50%;
  background: #f8f8f8;
  &:checked { border: 3px solid #0b63b5; background: #fff; }
  &:disabled { border-color: #cfcfd2; }
  &:disabled:checked { border: 3px solid #b9babd; }
`;
const DialogButton = styled.button<{ $wide?: boolean }>`
  height: 16px;
  min-width: ${p => (p.$wide ? 57 : 38)}px;
  padding: 0 4px;
  border: 1px solid #d3d3d6;
  border-radius: 2px;
  background: #fdfdfd;
  line-height: 10px;
  &:disabled { color: #a6a7ab; background: #f7f7f8; border-color: #e8e8ea; }
`;
const ButtonRow = styled.div`
  display: flex;
  gap: 4px;
  margin: 9px 0 4px;
`;
const CheckLabel = styled.label<{ $tall?: boolean }>`
  display: flex;
  align-items: center;
  gap: ${p => (p.$tall ? 2 : 1)}px;
  height: ${p => (p.$tall ? 15 : 10)}px;
  padding-left: ${p => (p.$tall ? 2 : 0)}px;
`;
const CheckBox = styled.input<{ $plain?: boolean }>`
  appearance: none;
  display: grid;
  place-content: center;
  width: 8px;
  height: 8px;
  margin: 0;
  border: 1px solid ${p => (p.$plain ? '#eceef2' : '#83868c')};
  border-radius: 2px;
  background: #fafafa;
  &:checked { border-color: #0b63b5; background: #0b63b5; }
  &:checked::after {
    content: '';
    width: 4px;
    height: 2px;
    border: solid #fff;
    border-width: 0 0 1px 1px;
    transform: rotate(-45deg);
  }
`;
const CurveButton = styled(DialogButton)`
  align-self: flex-start;
  margin: 4px 0 7px;
`;
const Actions = styled.div`
  display: grid;
  grid-template-columns: repeat(3, 1fr);
  gap: 5px;
  padding: 0 4px;
  button { min-width: 0; }
`;

/* ---------- bottom bars ---------- */

const SnapBar = styled.div`
  display: flex;
  align-items: center;
  gap: 5px;
  flex: none;
  height: 21px;
  padding: 2px 0 0 5px;
`;
const StatusBar = styled.footer`
  display: flex;
  flex: none;
  height: 11px;
  overflow: hidden;
  border-top: 1px solid ${LINE};
  line-height: 11px;
`;
const Cell = styled.span<{ $on?: boolean; $size?: 'm' | 'l' }>`
  flex: none;
  display: flex;
  align-items: center;
  justify-content: ${p => (p.$size === 'l' ? 'flex-start' : 'center')};
  gap: 1px;
  min-width: ${p => (p.$size === 'm' ? '49px' : p.$size === 'l' ? '140px' : '0')};
  padding: 0 3px;
  border-right: 1px solid ${LINE};
  background: ${p => (p.$on ? '#e9f3f8' : 'none')};
  font-weight: ${p => (p.$on ? 700 : 400)};
`;
const Readout = styled.span`
  padding-left: 2px;
`;

/* ---------- content ---------- */

const menus = ['文件(F)', '编辑(E)', '查看(V)', '曲线(C)', '曲面(S)', '细分物件(U)', '实体(O)', '网格(M)', '尺寸标注(D)', '变动(T)', '工具(L)', '分析(A)', '渲染(R)', '面板(P)', 'BG螺栓', '说明(H)'];
const tabs = ['标准', '卓尔谟犀牛', 'SubD工具', 'VRay5', '多边形建模', 'VSR-MR', 'V7', 'V6', 'V5', 'PeT', 'WB', 'PT', 'JS', '工作平面', '设置视图', '显示', '选取', '工作视窗配置', '可见性', '变动', '曲线工具', '曲面工具', '实体工具', '网格工具'];
const tools = 'pipe gem redbox orange redcheck globe bell torus frame figure rainbow sheets balls weave rectcut rectout dotcircle rhomb radius fourball cup tealpipe arcsurf diamond dotring grid3+ cubering portrait+ cross screen mesh+ dotrect meshball graymesh twist meshup scurve rocket wings black invert+ groupy spiral selrhomb ybox+ curvey grayarc people cube redblue | ringblue ringlight boxup boxplain boxrect boxcirc boxsave layers+ glass beach | grayface dotfill dotgrid maple'.split(' ');
const sideTools = 'arrow point+ polyline+ ctrl+ circle+ ellipse+ arc+ rect+ polygon+ fillet+ mesh+ patch+ box+ spheres+ cup+ plane+ puzzle explode trim split group+ ungroup bend bendpts+ text link+ squares slant boxball+ bars+ grid3+ chain+ slab+ check+ clouds+ pyramid+ bluec capsule dimension bolt redarrows greenarrows bigball bluesurf xcut tiger selshape save bluearrow xcurves wheel mlogo curves'.split(' ');
const panelTools = 'page copy cross2 up down left funnel+ doc+ hammer+ help'.split(' ');
const layers = [
  { color: '#000', current: true },
  { color: '#ff0000' },
  { color: '#0b93f5' },
  { color: '#16d914' },
  { color: '#ff0090' },
  { color: '#000', off: true },
  { color: '#000', off: true },
];
const rail = [
  ['wheelcolor', '属性'], ['render', '渲染'], ['brush', '材质'], ['folder', '材质…'], ['lamp', '灯光'], ['camera', '已命…'],
  ['helpbox', 'Help'], ['level', '底平…'], ['snapshot', '快照'], ['monitor', '显示'], ['dome', '环境'], ['layerred', '图层'],
];
const continuity = ['位置', '正切', '曲率', 'G3', 'G4'];
const snaps = ['端点', '最近点', '点', '中点', '中心点', '交点', '垂点', '切点', '四分点', '节点', '顶点'];
const modes: [string, boolean][] = [['锁定格点', false], ['正交', false], ['平面模式', true], ['物件锁点', true], ['智慧轨迹', false], ['操作轴', true], ['记录建构历史', true], ['过滤器', false]];

const parse = (t: string) => ({ name: t.replace('+', ''), menu: t.endsWith('+') });

const Pipes = () => (
  <Scene viewBox="40 109 888 440" preserveAspectRatio="xMinYMin slice" role="img" aria-label="透视图">
    <defs>
      <linearGradient id="left" gradientUnits="userSpaceOnUse" x1="130" y1="182" x2="109" y2="341">
        <stop offset="0" stopColor="#6f9df0" /><stop offset=".07" stopColor="#72a8fb" /><stop offset=".2" stopColor="#79b8ff" />
        <stop offset=".38" stopColor="#80c4ff" /><stop offset=".52" stopColor="#74b4ff" /><stop offset=".72" stopColor="#6b9fff" /><stop offset=".88" stopColor="#5a7dff" /><stop offset=".95" stopColor="#5577ee" /><stop offset="1" stopColor="#4866d2" />
      </linearGradient>
      <linearGradient id="right" gradientUnits="userSpaceOnUse" x1="700" y1="265" x2="678" y2="420">
        <stop offset="0" stopColor="#6a95f0" /><stop offset=".07" stopColor="#6ca1fa" /><stop offset=".22" stopColor="#74b3ff" />
        <stop offset=".42" stopColor="#79bcff" /><stop offset=".58" stopColor="#6fb0ff" /><stop offset=".76" stopColor="#6494ff" /><stop offset=".88" stopColor="#5376fb" /><stop offset=".95" stopColor="#4c69e6" /><stop offset="1" stopColor="#3c54c0" />
      </linearGradient>
      <linearGradient id="inside" x1="0" y1="0" x2="0" y2="1">
        <stop offset="0" stopColor="#08224b" /><stop offset=".12" stopColor="#2b3458" /><stop offset=".24" stopColor="#675a7c" /><stop offset=".48" stopColor="#a9809f" />
        <stop offset=".64" stopColor="#c493b4" /><stop offset=".8" stopColor="#b98dac" /><stop offset=".92" stopColor="#85708a" /><stop offset="1" stopColor="#4b4254" />
      </linearGradient>
      <radialGradient id="shine"><stop offset="0" stopColor="#98dcff" stopOpacity=".75" /><stop offset="1" stopColor="#8bccff" stopOpacity="0" /></radialGradient>
      <clipPath id="leftClip"><path d="M38 171L228 194L222 357L38 330Z" /></clipPath>
      <clipPath id="rightClip"><path d="M491 238L940 298V457L471 389C468 383 468 377 468 370C470 310 481 252 491 238Z" /></clipPath>
    </defs>
    <g clipPath="url(#leftClip)">
      <rect x="30" y="160" width="210" height="210" fill="url(#left)" />
      <ellipse cx="170" cy="241" rx="150" ry="18" fill="url(#shine)" transform="rotate(9 170 241)" />
    </g>
    <ellipse cx="224.5" cy="275.5" rx="32" ry="81.5" fill="url(#inside)" stroke="#d60fd0" strokeWidth="1.6" transform="rotate(2 224.5 275.5)" />
    <g clipPath="url(#rightClip)">
      <rect x="460" y="230" width="480" height="240" fill="url(#right)" />
      <ellipse cx="500" cy="302" rx="130" ry="20" fill="url(#shine)" transform="rotate(10 500 302)" />
    </g>
    <path d="M491 238C481 250 471 310 469 362C468 378 469 386 471 389" fill="none" stroke="#d60fd0" strokeWidth="1.6" />
    <g fill="none" stroke="#06060a" strokeWidth="2">
      <path d="M38 195L204 217C250 221 280 225 310 228C375 237 430 258 481 267L940 328" />
      <path d="M193 273L473 312" />
      <path d="M38 315.500L200 339C212 341 220 346 228 353" />
      <path d="M468 377.500L940 447" />
      <ellipse cx="339" cy="288.300" rx="99.300" ry="54.300" transform="rotate(17.800 339 288.300)" />
      <ellipse cx="316" cy="360.600" rx="93.700" ry="46.500" transform="rotate(14.900 316 360.600)" />
      <path d="M407 378Q438 374 468 378" />
    </g>
    <path d="M198 322L245 329" stroke="#3a2a3a" strokeWidth="1" />
    <path d="M438 373L468 378" stroke="#444" strokeWidth=".8" strokeDasharray="1 2" />
    <g fill="#fff" stroke="#111" strokeWidth="1.200">
      <circle cx="406.500" cy="378" r="4" /><circle cx="438" cy="373" r="4" /><circle cx="468.500" cy="378" r="4" />
    </g>
    <path d="M462 378H474M468.500 372V384" stroke="#111" strokeWidth="1.200" />
    <g fontFamily="Liberation Sans, sans-serif" fontSize="8" fontWeight="700" textAnchor="middle">
      <rect x="384" y="373" width="11" height="10" rx="4" fill="#050505" /><text x="389.500" y="381" fill="#fff">2</text>
      <rect x="480" y="373" width="10" height="10" rx="4" fill="#050505" /><text x="485" y="381" fill="#fff">1</text>
    </g>
    <g fill="none" stroke="#868b98" strokeWidth="1">
      <ellipse cx="454" cy="405" rx="8" ry="3" /><ellipse cx="454" cy="405" rx="3" ry="8" />
      <path d="M452 405H459M455 402V410" stroke="#fff" strokeDasharray="2 1" />
    </g>
    <g fill="none" strokeWidth="1">
      <path d="M66 523V512" stroke="#2b2bd0" /><path d="M66 523L89 526" stroke="#2ee04a" /><path d="M66 523L62.500 542" stroke="#d02a3a" />
    </g>
    <g fontFamily="Liberation Sans, sans-serif" fontSize="11" fontWeight="400">
      <text x="66" y="512" fill="#2b2bd0">z</text><text x="89" y="527" fill="#2ee04a">y</text><text x="63" y="544" fill="#d02a3a">x</text>
    </g>
  </Scene>
);

const BlendDialog = () => (
  <Dialog aria-label="调整曲线混接">
    <DialogTitle>
      <Icon name="rhino" size={9} />
      <DialogName>调整曲线混接</DialogName>
      <BareButton type="button" aria-label="关闭"><Svg $size={7} viewBox="0 0 16 16"><path d="M1 1L15 15M15 1L1 15" stroke="#85878c" strokeWidth="1.800" /></Svg></BareButton>
    </DialogTitle>
    <DialogBody>
      <Legend>连续性</Legend>
      <RadioGrid>
        <span /><ColumnHead>1</ColumnHead><ColumnHead>2</ColumnHead>
        {continuity.map((c, i) => (
          <React.Fragment key={c}>
            <span>{c}</span>
            <Radio type="radio" name="end1" aria-label={`${c} 1`} defaultChecked={i === 1} />
            <Radio type="radio" name="end2" aria-label={`${c} 2`} defaultChecked={i === 1} disabled />
          </React.Fragment>
        ))}
      </RadioGrid>
      <ButtonRow>
        <DialogButton type="button">反转 1</DialogButton>
        <DialogButton type="button" disabled>反转 2</DialogButton>
      </ButtonRow>
      <CheckLabel $tall><CheckBox type="checkbox" />修剪</CheckLabel>
      <CheckLabel $tall><CheckBox type="checkbox" />组合</CheckLabel>
      <CurveButton type="button" $wide>显示曲率图形</CurveButton>
    </DialogBody>
    <Actions>
      <DialogButton type="button">确定</DialogButton>
      <DialogButton type="button">取消</DialogButton>
      <DialogButton type="button">说明</DialogButton>
    </Actions>
  </Dialog>
);

const LayerPanel = () => (
  <Panel>
    <PanelBody>
      <PanelTools>
        {panelTools.map(parse).map(t => <PanelTool key={t.name} aria-label={t.name}><Icon {...t} size={9} /></PanelTool>)}
      </PanelTools>
      <LayerTable>
        <thead><tr><th /><th /><th /><th /><th /><th>材质</th></tr></thead>
        <tbody>
          {layers.map((l, i) => (
            <tr key={i}>
              <td />
              <td>{l.current && <Icon name="check" size={9} />}</td>
              <td>{!l.current && <Icon name={l.off ? 'bulboff' : 'bulb'} size={9} />}</td>
              <td>{!l.current && <Icon name="lock" size={9} />}</td>
              <td><Swatch $color={l.color} /></td>
              <td />
            </tr>
          ))}
        </tbody>
      </LayerTable>
      <Filler />
      <Scroll><Thumb /></Scroll>
    </PanelBody>
    <Rail>
      {rail.map(([icon, label], i) => (
        <RailTab key={i}><Icon name={icon} size={10} /><RailLabel>{label}</RailLabel></RailTab>
      ))}
      <RailFoot><Icon name="gear" size={9} /></RailFoot>
    </Rail>
  </Panel>
);

export default function App() {
  return (
    <Shell>
      <GlobalStyle />
      <TitleBar>
        <Icon name="rhino" size={9} />
        <TitleText>Rhinoceros WIP - [透视图]</TitleText>
        <WindowButtons>
          {['M3 8H13', 'M3 6H10V13H3ZM6 6V3H13V10H10', 'M3 3L13 13M13 3L3 13'].map((d, i) => (
            <WindowButton key={d} aria-label={['最小化', '还原', '关闭'][i]}>
              <Svg $size={8} viewBox="0 0 16 16"><path d={d} fill="none" stroke="#333" strokeWidth="1.800" /></Svg>
            </WindowButton>
          ))}
        </WindowButtons>
      </TitleBar>
      <MenuBar>{menus.map(m => <BareButton key={m}>{m}</BareButton>)}</MenuBar>
      <CommandArea>
        <History>{'选取要混接的曲线 ( 边缘(E)  混接起点(B)=曲线端点  点(P) ): 点\n曲线终点'}</History>
        <Prompt>选取要调整的控制点。:<PromptInput type="text" /></Prompt>
      </CommandArea>
      <TabStrip>
        <TabGroup>{tabs.map((t, i) => <Tab key={t} $active={i === 1}>{t}</Tab>)}</TabGroup>
        <TabCut>渲染</TabCut>
        <More aria-label="更多">»</More>
        <More aria-label="选项"><Icon name="gear" size={9} /></More>
      </TabStrip>
      <ToolRow>
        {tools.map((t, i) => (t === '|' ? <ToolDivider key={i} /> : <Tool key={i} aria-label={parse(t).name}><Icon {...parse(t)} /></Tool>))}
      </ToolRow>
      <Work>
        <SideTools>
          <Grip />
          <SideGrid>
            {sideTools.map((t, i) => <SideTool key={i} aria-label={parse(t).name}><Icon {...parse(t)} /></SideTool>)}
            <SideTool>»</SideTool>
          </SideGrid>
        </SideTools>
        <Viewport>
          <Pipes />
          <ViewTitle>透视图<ViewMenu aria-label="视图菜单"><Svg $size={5} viewBox="0 0 16 16"><path d="M0 3H16L8 13Z" fill="#0a1a28" /></Svg></ViewMenu></ViewTitle>
        </Viewport>
        <LayerPanel />
        <BlendDialog />
      </Work>
      <SnapBar>
        {snaps.map(s => <CheckLabel key={s}><CheckBox type="checkbox" defaultChecked={s === '最近点' || s === '四分点'} />{s}</CheckLabel>)}
        <CheckLabel><CheckBox type="checkbox" $plain />投影</CheckLabel>
        <span />
        <CheckLabel><CheckBox type="checkbox" $plain />停用</CheckLabel>
      </SnapBar>
      <StatusBar>
        <Cell>工作平面</Cell>
        <Cell $size="m">x 1.017</Cell>
        <Cell $size="m">y 106.456</Cell>
        <Cell $size="m">z -23.070</Cell>
        <Cell $size="m">毫米</Cell>
        <Cell $size="l"><Swatch $color="#000" />默认</Cell>
        {modes.map(([m, on]) => <Cell key={m} $on={on}>{m}</Cell>)}
        <Readout>CPU 使用量: 3.1 %</Readout>
      </StatusBar>
    </Shell>
  );
}
